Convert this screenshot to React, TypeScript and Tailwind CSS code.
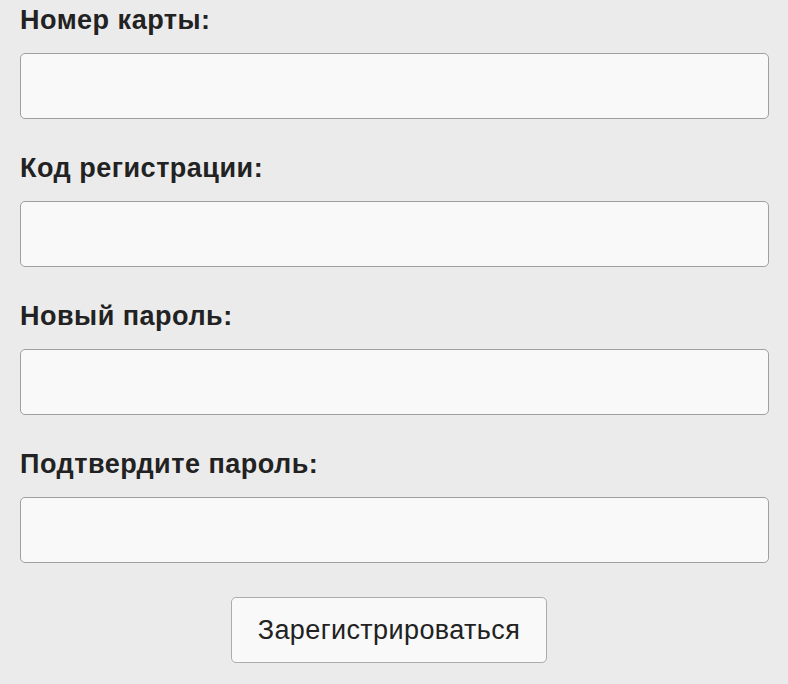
const fields = ['Номер карты:', 'Код регистрации:', 'Новый пароль:', 'Подтвердите пароль:'];

export default function App() {
  return (
    <div className="min-h-screen w-[788px] h-[684px] overflow-hidden bg-[#ebebeb] font-['Liberation_Sans',Arial,sans-serif]">
      <form className="pl-5 pr-[19px] pt-[5px]" onSubmit={(e) => e.preventDefault()}>
        {fields.map((label) => (
          <div key={label} className="mb-[34px]">
            <label className="block text-[27px] leading-[30px] tracking-[0.5px] font-bold text-[#222] mb-[18px]">{label}</label>
            <input
              type="text"
              className="block w-full h-[66px] rounded-[5px] border border-[#a0a0a0] bg-[#f9f9f9] px-3 text-[22px] outline-none"
            />
          </div>
        ))}
        <div className="flex">
          <button
            type="submit"
            className="ml-[211px] w-[316px] h-[66px] rounded-[5px] border border-[#acacac] bg-[#f9f9f9] text-[27px] tracking-[0.4px] text-[#222]"
          >
            Зарегистрироваться
          </button>
        </div>
      </form>
    </div>
  );
}
